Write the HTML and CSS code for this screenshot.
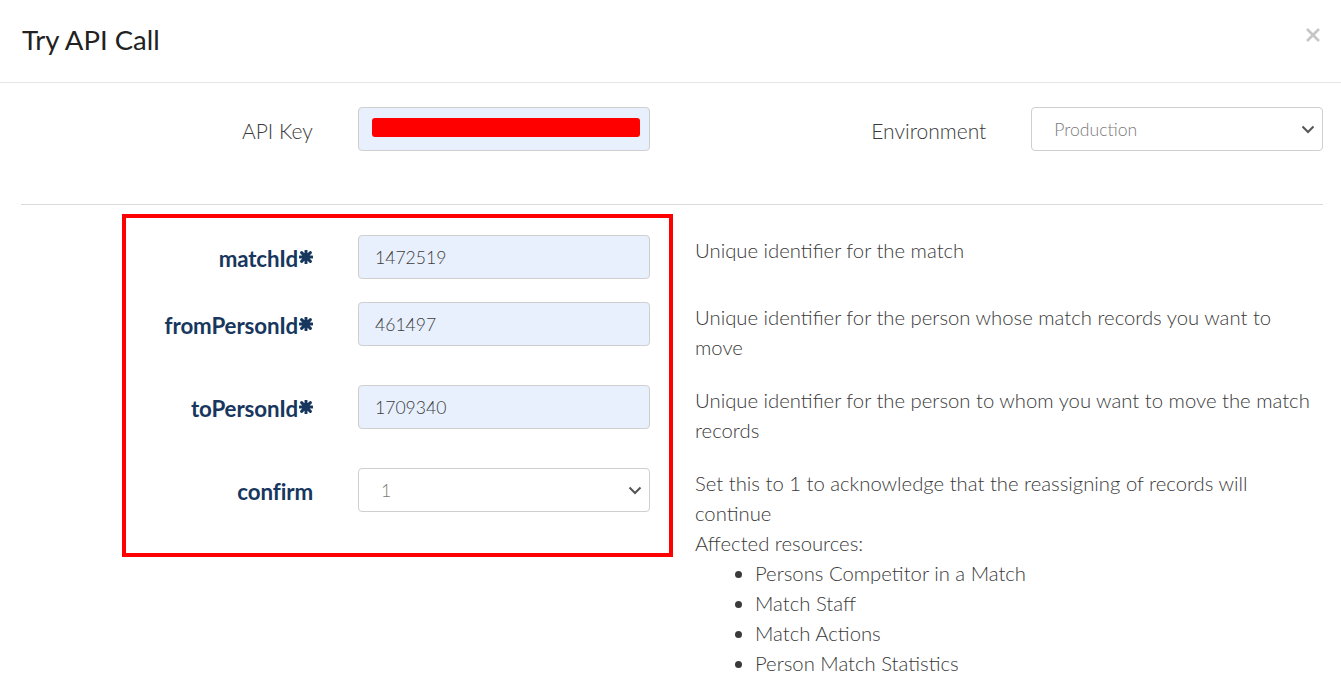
FILE: index.html
```html
<!DOCTYPE html>
<html>
<head>
<meta charset="utf-8">
<link rel="stylesheet" href="styles.css">
</head>
<body>
<div class="modal">
  <div class="modal-header">
    <h1 class="title">Try API Call</h1>
    <svg class="close" width="16" height="16" viewBox="0 0 16 16"><path d="M2 2 L14 14 M14 2 L2 14" stroke="#c6c6c6" stroke-width="2.6" stroke-linecap="butt"/></svg>
  </div>
  <div class="modal-body">
    <div class="top-row">
      <label class="top-label">API Key</label>
      <div class="field field-filled"><span class="redact"></span></div>
      <label class="top-label">Environment</label>
      <div class="field field-select"><span class="sel-text">Production</span>
        <svg class="chev" width="14" height="9" viewBox="0 0 14 9"><path d="M1.5 1.5 L7 7 L12.5 1.5" fill="none" stroke="#555" stroke-width="2"/></svg>
      </div>
    </div>
    <div class="divider"></div>
    <div class="params">
      <div class="highlight"></div>
      <div class="param-row">
        <label class="param-label">matchId<svg class="ast" width="14" height="14" viewBox="0 0 16 16"><path d="M8 1 V15 M1 8 H15 M3 3 L13 13 M13 3 L3 13" stroke="#17375e" stroke-width="3.4" stroke-linecap="round"/></svg></label>
        <div class="field field-filled"><span class="val">1472519</span></div>
        <div class="desc">Unique identifier for the match</div>
      </div>
      <div class="param-row">
        <label class="param-label">fromPersonId<svg class="ast" width="14" height="14" viewBox="0 0 16 16"><path d="M8 1 V15 M1 8 H15 M3 3 L13 13 M13 3 L3 13" stroke="#17375e" stroke-width="3.4" stroke-linecap="round"/></svg></label>
        <div class="field field-filled"><span class="val">461497</span></div>
        <div class="desc">Unique identifier for the person whose match records you want to move</div>
      </div>
      <div class="param-row">
        <label class="param-label">toPersonId<svg class="ast" width="14" height="14" viewBox="0 0 16 16"><path d="M8 1 V15 M1 8 H15 M3 3 L13 13 M13 3 L3 13" stroke="#17375e" stroke-width="3.4" stroke-linecap="round"/></svg></label>
        <div class="field field-filled"><span class="val">1709340</span></div>
        <div class="desc">Unique identifier for the person to whom you want to move the match records</div>
      </div>
      <div class="param-row">
        <label class="param-label">confirm</label>
        <div class="field field-select"><span class="sel-text">1</span>
          <svg class="chev" width="14" height="9" viewBox="0 0 14 9"><path d="M1.5 1.5 L7 7 L12.5 1.5" fill="none" stroke="#555" stroke-width="2"/></svg>
        </div>
        <div class="desc">Set this to 1 to acknowledge that the reassigning of records will continue<br>Affected resources:
          <ul class="res-list">
            <li>Persons Competitor in a Match</li>
            <li>Match Staff</li>
            <li>Match Actions</li>
            <li>Person Match Statistics</li>
          </ul>
        </div>
      </div>
    </div>
  </div>
</div>
</body>
</html>
```

FILE: styles.css
```css
* { box-sizing: border-box; }
html, body { margin: 0; padding: 0; background: #fff; }
body {
  font-family: Lato, "Open Sans", "Liberation Sans", sans-serif;
  color: #333;
  overflow: hidden;
}
.modal { width: 1341px; }
.modal-header {
  height: 83px;
  border-bottom: 1px solid #e5e5e5;
  display: flex;
  align-items: center;
  justify-content: space-between;
  padding: 0 20px 0 22px;
}
.title {
  margin: 0;
  font-size: 27.5px;
  font-weight: 400;
  color: #222;
  line-height: 1;
  padding-bottom: 2px;
}
.close { margin-top: -12px; }
.modal-body { padding: 24px 18px 0 21px; }
.top-row {
  display: grid;
  grid-template-columns: repeat(4, 1fr);
  column-gap: 45px;
  align-items: start;
}
.top-label {
  text-align: right;
  font-size: 21px;
  font-weight: 300;
  color: #3a3a3a;
  line-height: 44px;
  height: 44px;
  padding-top: 2px;
}
.field {
  height: 44px;
  border: 1px solid #cfcfcf;
  border-radius: 4px;
  display: flex;
  align-items: center;
  font-size: 17.6px;
  font-weight: 400;
}
.field-filled { background: #e8f0fe; padding-left: 16px; color: #444; }
.field-select { background: #fff; padding: 0 7px 0 22px; justify-content: space-between; color: #777; }
.redact {
  display: block;
  width: 268px;
  height: 19px;
  background: #ff0000;
  border-radius: 3px;
  margin-left: -3px;
  margin-top: -3px;
}
.val { color: #3c3c3c; font-weight: 300; }
.sel-text { color: #7a7a7a; font-weight: 300; }
.divider {
  height: 1px;
  background: #d9d9d9;
  margin: 53px 0 30px 0;
}
.params { position: relative; }
.highlight {
  position: absolute;
  left: 101px;
  top: -21px;
  width: 551px;
  height: 343px;
  border: 4px solid #ff0000;
  pointer-events: none;
}
.param-row {
  display: grid;
  grid-template-columns: 292px 292px 1fr;
  column-gap: 45px;
  align-items: start;
  margin-bottom: 23px;
}
.param-label {
  text-align: right;
  font-size: 22.3px;
  font-weight: 700;
  color: #17375e;
  line-height: 44px;
  height: 44px;
  padding-top: 3px;
  display: flex;
  justify-content: flex-end;
  align-items: center;
  letter-spacing: -0.1px;
}
.ast { margin-left: 1px; margin-top: -3px; }
.desc {
  font-size: 20.3px;
  font-weight: 300;
  color: #3a3a3a;
  line-height: 30px;
}
.res-list {
  margin: 0;
  padding-left: 60px;
}
.res-list li { line-height: 30px; }
```
